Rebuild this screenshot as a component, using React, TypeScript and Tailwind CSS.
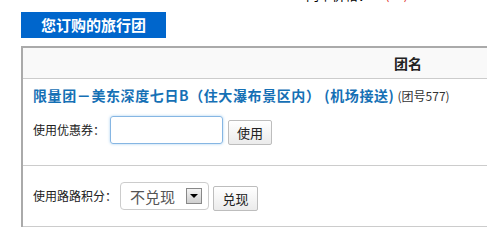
const CJK = '"Noto Sans CJK SC", "Liberation Sans", sans-serif'

export default function App() {
  return (
    <div className="h-[228px] w-[487px] overflow-hidden bg-white" style={{ fontFamily: CJK }}>
      {/* price line above the section, mostly scrolled out of view */}
      <div className="h-[3px] overflow-hidden">
        <div className="-mt-[13px] flex pl-[306px] text-[13px] leading-[15px]">
          <span className="text-black">门市价格：</span>
          <span className="ml-[14px] text-[#e0302a]">(¥¥)</span>
        </div>
      </div>

      <div className="ml-[21px] mt-[9px] flex h-[26px] w-[145px] items-center bg-[#0066cc] pl-[20px] text-[15px] font-bold text-white">
        您订购的旅行团
      </div>

      <div className="mt-[8px] ml-[21px] w-[772px] border-t-2 border-l-2 border-[#aaaaaa]">
        <div className="flex h-[31px] items-center justify-center border-b border-[#cccccc] bg-[#f9f9f9] text-[14px] font-bold text-[#222]">
          团名
        </div>

        <div className="flex h-[87px] flex-col gap-[9px] border-b border-[#cccccc] px-[10px] pt-[6px]">
          <div className="flex items-baseline">
            <span className="text-[14px] font-bold tracking-[0.6px] text-[#1570b5]">
              限量团－美东深度七日B（住大瀑布景区内） (机场接送)
            </span>
            <span className="ml-[3px] text-[12px] text-[#333]">(团号577)</span>
          </div>
          <div className="flex items-center">
            <span className="text-[12px] text-[#222]">使用优惠券：</span>
            <input
              className="ml-[5px] h-[28px] w-[113px] rounded-[3px] border border-[#86b6e3] shadow-[0_0_3px_#a8d0f0] outline-none"
              type="text"
            />
            <button className="mt-[5px] ml-[5px] h-[25px] w-[44px] rounded-[2px] border border-[#bdbdbd] bg-gradient-to-b from-white to-[#ebebeb] text-[13px] text-[#222]">
              使用
            </button>
          </div>
        </div>

        <div className="flex h-[61px] items-center border-b border-[#cccccc] px-[10px]">
          <span className="text-[12px] text-[#222]">使用路路积分：</span>
          <div className="ml-[3px] flex h-[28px] w-[89px] items-center justify-between rounded-[4px] border border-[#cccccc] pr-[6px] pl-[9px]">
            <span className="text-[15px] leading-none text-[#555]">不兑现</span>
            <span className="flex h-[16px] w-[16px] items-center justify-center border border-[#888] bg-gradient-to-b from-[#f4f4f4] to-[#cfcfcf]">
              <span className="h-0 w-0 border-x-[4px] border-t-[4px] border-x-transparent border-t-black" />
            </span>
          </div>
          <button className="mt-[5px] ml-[4px] h-[25px] w-[45px] rounded-[2px] border border-[#bdbdbd] bg-gradient-to-b from-white to-[#ebebeb] text-[13px] text-[#222]">
            兑现
          </button>
        </div>
      </div>
    </div>
  )
}
